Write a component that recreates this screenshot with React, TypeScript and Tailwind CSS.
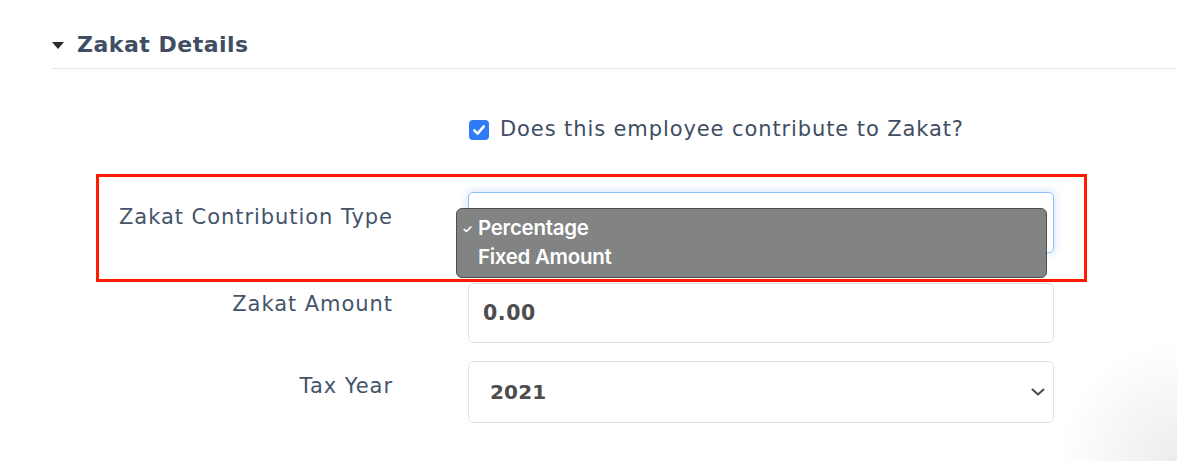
import {useState} from "react";

// label font: gotham-ish, fall back to something wide
const labelFont = "font-['DejaVu_Sans',sans-serif]";

const App = () => {
  const [contributes, setContributes] = useState(true);

  return (
    <div className="relative w-[1177px] h-[461px] overflow-hidden bg-white">
      {/* faint shade in bottom right corner */}
      <div className="absolute right-[-120px] bottom-[-120px] w-[240px] h-[240px] rounded-full bg-[radial-gradient(circle,#ececec_0%,#ffffff00_70%)]" />

      <div className="pl-[52px] pt-[28px]">
        {/* Header */}
        <div className="flex items-center gap-[13px] h-[32px]">
          <span className="w-0 h-0 border-l-[6px] border-r-[6px] border-t-[7px] border-l-transparent border-r-transparent border-t-[#2b2b2b] mt-[2px]" />
          <h2 className={`${labelFont} text-[22px] font-bold text-[#3f4e63] tracking-[0.5px]`}>Zakat Details</h2>
        </div>
        <div className="mt-[8px] h-px bg-[#e4e4e4]" />
      </div>

      {/* Checkbox row */}
      <div className="flex items-center gap-[11px] pl-[469px] mt-[50px] h-[22px]">
        <button
          onClick={() => setContributes(!contributes)}
          className="w-[20px] h-[20px] rounded-[4px] bg-[#2f7bf5] flex items-center justify-center">
          {contributes && (
            <svg width="14" height="14" viewBox="0 0 14 14">
              <path d="M2.3 7.4 L5.6 10.6 L11.8 3.4" fill="none" stroke="white" strokeWidth="2.6" strokeLinecap="round" strokeLinejoin="round" />
            </svg>
          )}
        </button>
        <span className={`${labelFont} text-[21px] text-[#3f4e63] tracking-[0.9px]`}>
          Does this employee contribute to Zakat?
        </span>
      </div>

      {/* Form rows */}
      <div className="mt-[51px] flex flex-col">
        <div className="flex gap-[75px]">
          <label className={`${labelFont} w-[393px] text-right pt-[10px] text-[21px] text-[#44546a] tracking-[0.95px]`}>
            Zakat Contribution Type
          </label>
          <div className="w-[586px] h-[61px] rounded-[5px] border border-[#8ec0f5] shadow-[0_0_8px_2px_#dbeafb] bg-white" />
        </div>

        <div className="flex gap-[75px] mt-[30px]">
          <label className={`${labelFont} w-[393px] text-right pt-[6px] text-[21px] text-[#44546a] tracking-[0.95px]`}>
            Zakat Amount
          </label>
          <div className="w-[586px] h-[60px] rounded-[5px] border border-[#e2e2e2] bg-white flex items-center pl-[14px]">
            <span className={`${labelFont} text-[20.5px] font-bold text-[#4d4d4d] tracking-[0.6px]`}>0.00</span>
          </div>
        </div>

        <div className="flex gap-[75px] mt-[18px]">
          <label className={`${labelFont} w-[393px] text-right pt-[10px] text-[21px] text-[#44546a] tracking-[0.95px]`}>
            Tax Year
          </label>
          <div className="w-[586px] h-[62px] rounded-[5px] border border-[#e2e2e2] bg-white flex items-center justify-between pl-[21px] pr-[8px]">
            <span className={`${labelFont} text-[20px] font-bold text-[#4d4d4d] tracking-[0.2px]`}>2021</span>
            <svg width="14" height="10" viewBox="0 0 14 10">
              <path d="M1.5 2.5 L7 7.5 L12.5 2.5" fill="none" stroke="#4a4a4a" strokeWidth="2" strokeLinecap="round" strokeLinejoin="round" />
            </svg>
          </div>
        </div>
      </div>

      {/* red highlight box (annotation) */}
      <div className="absolute left-[96px] top-[174px] w-[991px] h-[108px] border-[3px] border-[#ff1a00]" />

      {/* open select menu */}
      <div className="absolute left-[456px] top-[208px] w-[591px] h-[70px] rounded-[6px] border border-[#4e4e4e] bg-[#828383] pt-[5px] font-['Inter',sans-serif] text-white">
        <div className="relative h-[29px] flex items-center pl-[21px] text-[20.5px] font-semibold tracking-[-0.3px]">
          <span className="absolute left-[5px] top-[6px] text-[12px]">✓</span>
          Percentage
        </div>
        <div className="h-[29px] flex items-center pl-[21px] text-[20.5px] font-semibold tracking-[-0.3px]">Fixed Amount</div>
      </div>
    </div>
  );
};

export default App;
